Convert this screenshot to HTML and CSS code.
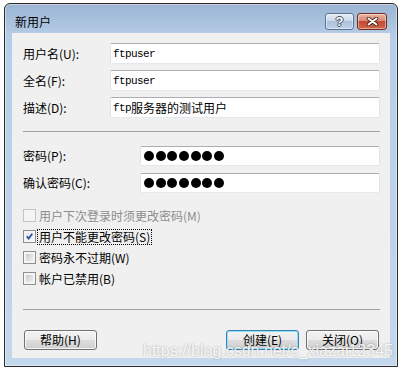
FILE: index.html
```html
<!DOCTYPE html>
<html lang="zh">
<head>
<meta charset="utf-8">
<title>新用户</title>
<link rel="stylesheet" href="styles.css">
</head>
<body>
<div class="window">
  <div class="titlebar">
    <span class="title">新用户</span>
    <div class="caption-btns">
      <div class="cbtn help"><span class="qmark">?</span></div>
      <div class="cbtn close">
        <svg width="13" height="9" viewBox="0 0 13 9">
          <path d="M2.5 1.5 L10.5 7.5 M10.5 1.5 L2.5 7.5" stroke="#4a1f17" stroke-width="3.6" stroke-linecap="round" fill="none"/>
          <path d="M2.5 1.5 L10.5 7.5 M10.5 1.5 L2.5 7.5" stroke="#ffffff" stroke-width="2" stroke-linecap="round" fill="none"/>
        </svg>
      </div>
    </div>
  </div>
  <div class="client">
    <div class="rows">
      <div class="row"><span class="label">用户名(U):</span><div class="input"><span class="mono">ftpuser</span></div></div>
      <div class="row"><span class="label">全名(F):</span><div class="input"><span class="mono">ftpuser</span></div></div>
      <div class="row"><span class="label">描述(D):</span><div class="input"><span class="mono">ftp</span><span class="cjk">服务器的测试用户</span></div></div>
    </div>
    <div class="sep first"></div>
    <div class="rows pw">
      <div class="row"><span class="label">密码(P):</span><div class="input"><span class="dots"><i></i><i></i><i></i><i></i><i></i><i></i><i></i></span></div></div>
      <div class="row"><span class="label">确认密码(C):</span><div class="input"><span class="dots"><i></i><i></i><i></i><i></i><i></i><i></i><i></i></span></div></div>
    </div>
    <div class="checks">
      <div class="check disabled"><span class="box"><span class="inner"></span></span><span class="clabel">用户下次登录时须更改密码(M)</span></div>
      <div class="check"><span class="box checked"><span class="inner">
        <svg width="7" height="7" viewBox="0 0 7 7"><path d="M0.8 3.4 L2.7 5.6 L6.3 0.8" stroke="#2a4da0" stroke-width="1.7" fill="none"/></svg>
      </span></span><span class="clabel focus">用户不能更改密码(S)</span></div>
      <div class="check"><span class="box"><span class="inner"></span></span><span class="clabel">密码永不过期(W)</span></div>
      <div class="check"><span class="box"><span class="inner"></span></span><span class="clabel">帐户已禁用(B)</span></div>
    </div>
    <div class="sep second"></div>
    <div class="buttons">
      <div class="btn">帮助(H)</div>
      <div class="spacer"></div>
      <div class="btn default">创建(E)</div>
      <div class="btn close-btn">关闭(O)</div>
    </div>
  </div>
  <div class="watermark">https://blog.csdn.net/c_xiazai12345</div>
</div>
</body>
</html>
```
FILE: styles.css
```css
* { box-sizing: border-box; }
body {
  margin: 0;
  background: #ffffff;
  font-family: "Noto Sans CJK SC", "Liberation Sans", sans-serif;
  font-size: 12px;
  color: #000;
}
.window {
  position: relative;
  margin: 3px 0 0 4px;
  width: 394px;
  height: 364px;
  border: 1px solid #2a2a2a;
  border-radius: 6px 6px 0 0;
  background: linear-gradient(#9bb5d3 0, #a7c0dc 16px, #b6cde7 32px, #bad0e9 120px, #c3d7ed 364px);
  box-shadow: inset 0 0 0 1px rgba(255,255,255,0.45);
  display: flex;
  flex-direction: column;
}
.titlebar {
  height: 29px;
  flex: none;
  display: flex;
  justify-content: space-between;
  align-items: flex-start;
  padding: 0 10px;
}
.title {
  margin-top: 11px;
  line-height: 14px;
  font-size: 12px;
}
.caption-btns {
  margin-top: 9px;
  display: flex;
  gap: 3px;
}
.cbtn {
  height: 17px;
  border-radius: 3px;
  border: 1px solid #5d7192;
  display: flex;
  align-items: center;
  justify-content: center;
  box-shadow: inset 0 0 0 1px rgba(255,255,255,0.45);
}
.cbtn.help {
  width: 29px;
  background: linear-gradient(#e4ecf6 0%, #cbd9ea 45%, #adc1dc 50%, #bed1e8 100%);
}
.cbtn.close {
  width: 30px;
  border-color: #6e2d21;
  background: linear-gradient(#eab2a4 0%, #d98a75 45%, #c44a30 50%, #d1674b 100%);
}
.qmark {
  font-family: "Liberation Sans", sans-serif;
  font-weight: bold;
  font-size: 13px;
  line-height: 13px;
  color: #ffffff;
  text-shadow: 1px 0 0 #3f4f66, -1px 0 0 #3f4f66, 0 1px 0 #3f4f66, 0 -1px 0 #3f4f66;
}
.client {
  margin: 0 7px;
  height: 325px;
  flex: none;
  background: #f0f0f0;
  padding: 10px 10px 0 11px;
}
.rows {
  display: flex;
  flex-direction: column;
  gap: 6px;
}
.row {
  display: flex;
  align-items: center;
  height: 21px;
}
.label {
  width: 87px;
  flex: none;
  line-height: 14px;
}
.input {
  flex: 1;
  height: 100%;
  background: #ffffff;
  border: 1px solid;
  border-color: #abadb3 #e2e3ea #e3e9ef #e2e3ea;
  border-radius: 2px;
  padding-left: 2px;
  display: flex;
  align-items: center;
}
.mono {
  font-family: "Liberation Mono", monospace;
  font-size: 11px;
  letter-spacing: -0.6px;
}
.cjk {
  font-size: 12px;
  line-height: 14px;
}
.sep {
  border-top: 1px solid #a0a0a0;
  height: 0;
}
.sep.first { margin-top: 13px; }
.sep.second { margin-top: 20px; }
.pw { margin-top: 14px; gap: 7px; }
.pw .row { height: 20px; }
.pw .label { width: 117px; }
.pw .input { padding-left: 3px; }
.dots {
  display: flex;
  gap: 1.7px;
}
.dots i {
  width: 10px;
  height: 10px;
  border-radius: 50%;
  background: #000;
}
.checks { margin-top: 12px; }
.check {
  height: 21px;
  display: flex;
  align-items: center;
}
.box {
  width: 13px;
  height: 13px;
  flex: none;
  border: 1px solid #8e8f8f;
  background: #f4f4f4;
  padding: 2px;
  margin-right: 2px;
}
.box .inner {
  display: flex;
  align-items: center;
  justify-content: center;
  width: 7px;
  height: 7px;
  background: linear-gradient(135deg, #c7cbd1, #eef0f2);
}
.box.checked .inner {
  background: linear-gradient(135deg, #e2e5ea, #f8f8f8);
}
.clabel {
  line-height: 14px;
  padding: 0 1px;
}
.clabel.focus {
  outline: 1px dotted #000;
}
.check.disabled .box {
  border-color: #c5c5c5;
  background: #f4f4f4;
}
.check.disabled .inner { background: #f4f4f4; }
.check.disabled .clabel { color: #8d8d8d; }
.buttons {
  margin-top: 20px;
  display: flex;
  padding: 0 1px;
}
.spacer { flex: 1; }
.btn {
  width: 73px;
  height: 20px;
  border: 1px solid #707070;
  border-radius: 3px;
  background: linear-gradient(#f2f2f2 0%, #ebebeb 48%, #dddddd 52%, #cfcfcf 100%);
  box-shadow: inset 0 0 0 1px rgba(255,255,255,0.75);
  display: flex;
  align-items: center;
  justify-content: center;
  line-height: 14px;
}
.btn.default {
  border-color: #3c7fb1;
  box-shadow: inset 0 0 0 1px #8fe0fb;
}
.close-btn { margin-left: 7px; }
.watermark {
  position: absolute;
  left: 138px;
  top: 339px;
  font-family: "Liberation Sans", sans-serif;
  font-size: 16px;
  line-height: 15px;
  color: rgba(255,255,255,0.9);
  text-shadow: 0 0 2px rgba(0,0,0,0.35);
  white-space: nowrap;
}
```
